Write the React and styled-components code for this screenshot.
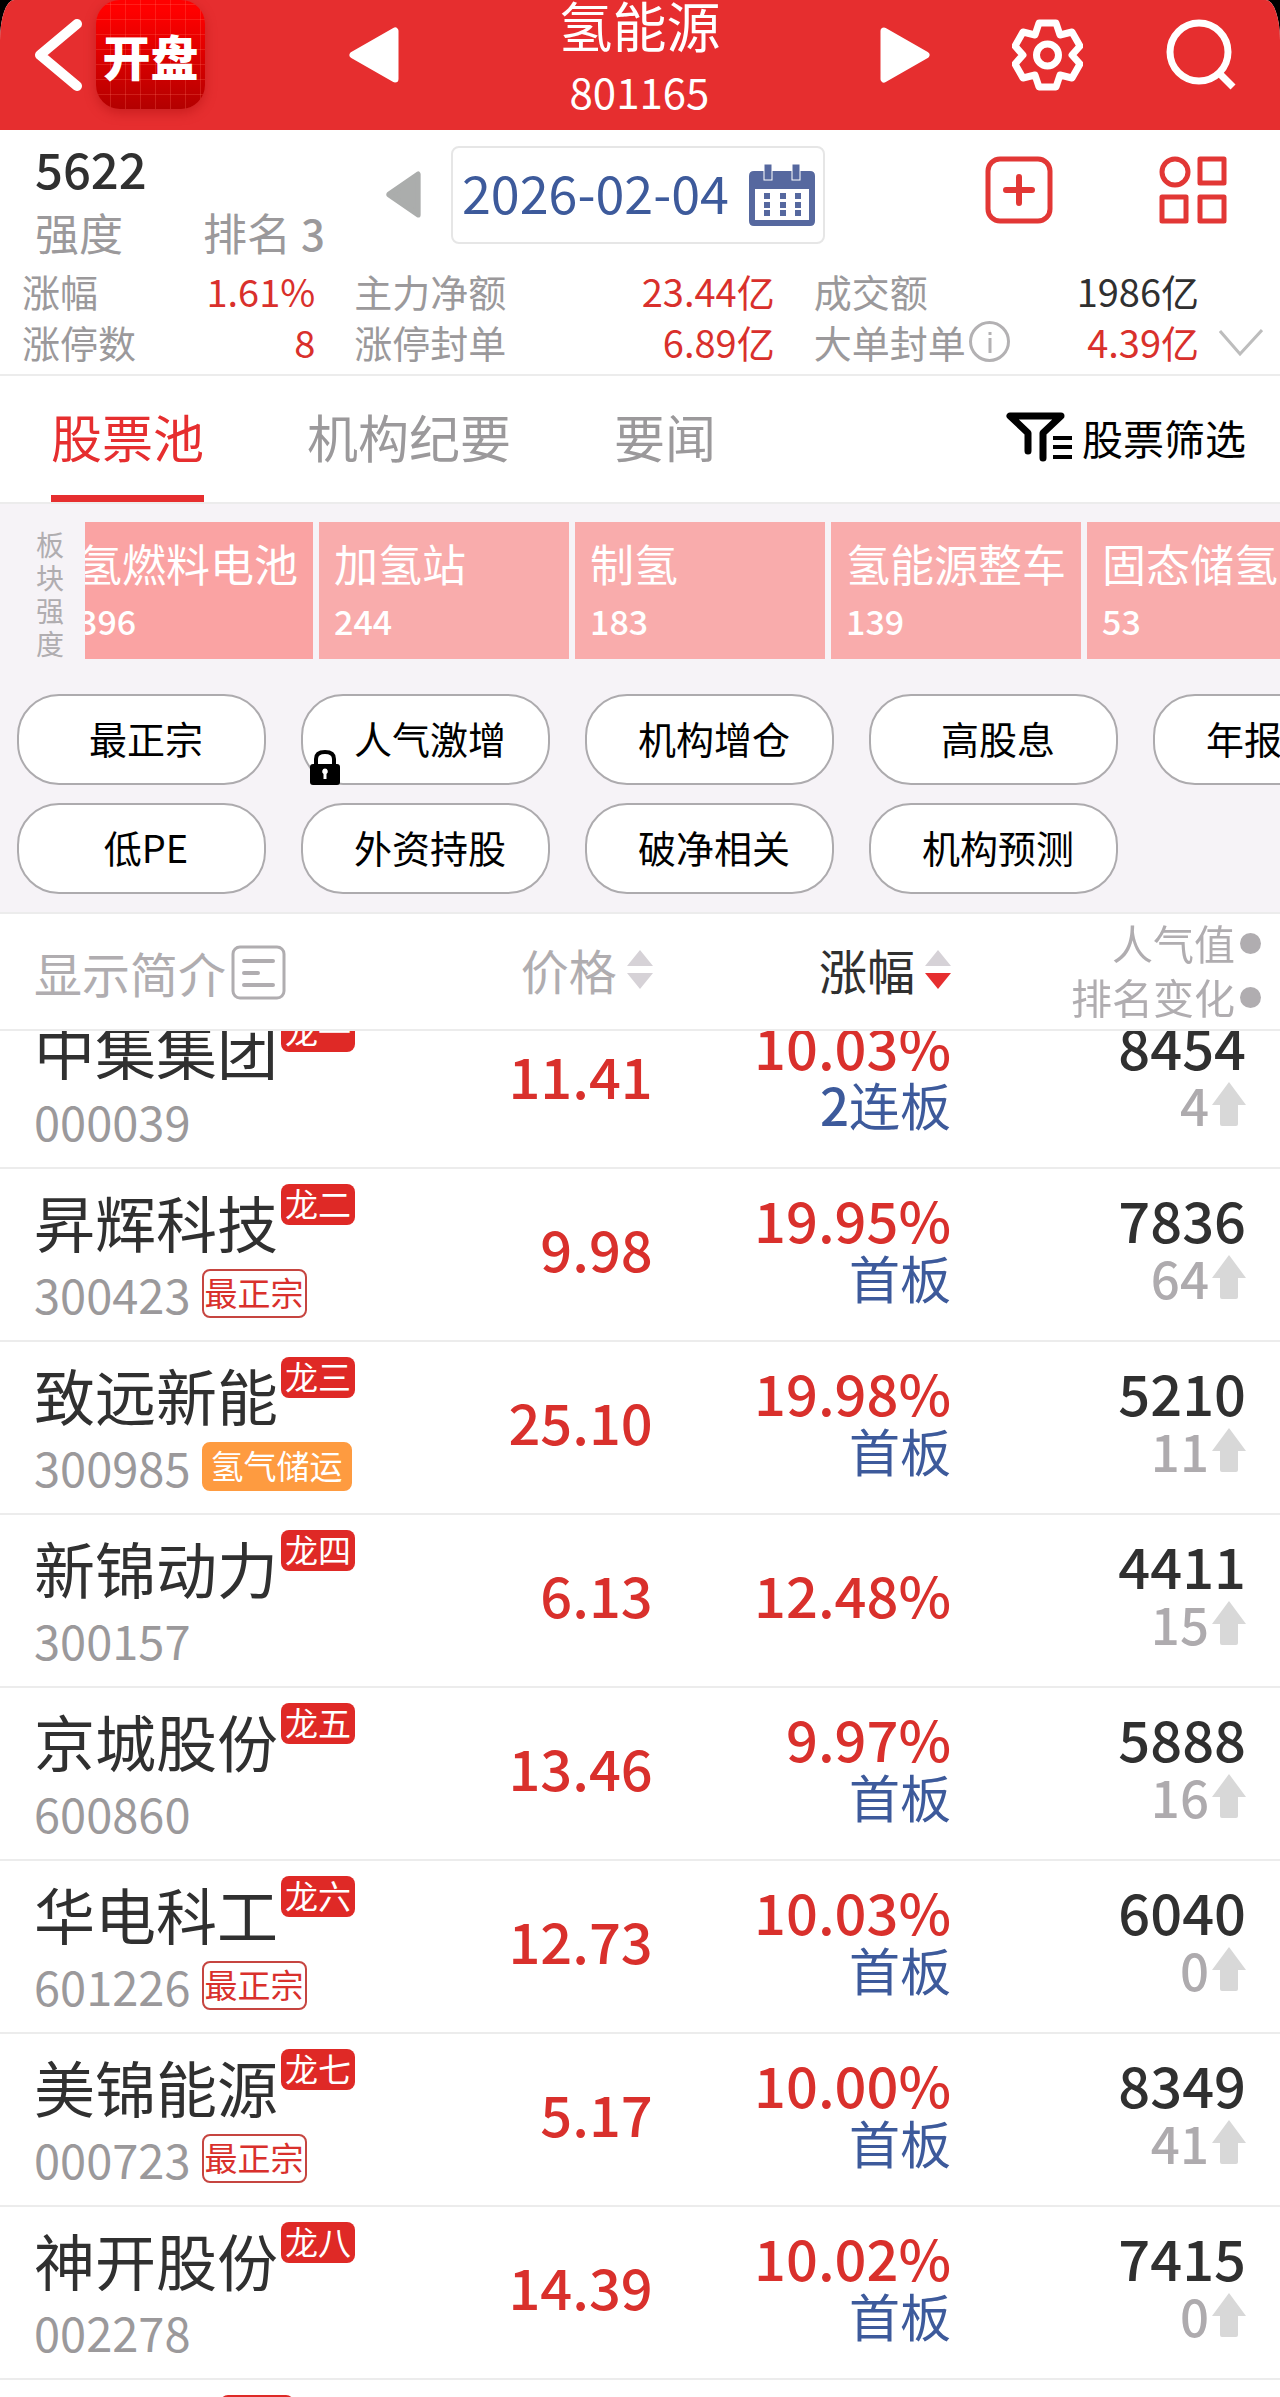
import React, { useLayoutEffect, useRef } from "react";
import styled, { createGlobalStyle } from "styled-components";

const red = "#e62e2f";
const valueRed = "#d9302c";
const ink = "#303030";
const muted = "#9b999b";
const faint = "#b0adb0";
const blue = "#3d5a9b";
const line = "#ececec";

const GlobalStyle = createGlobalStyle`
  * { box-sizing: border-box; }
  body { margin: 0; background: #000; }
  body, button {
    font-family: "Noto Sans CJK SC", "Noto Sans", sans-serif;
  }
  button {
    border: 0;
    padding: 0;
    margin: 0;
    background: none;
    color: inherit;
    cursor: pointer;
  }
  svg { display: block; flex: none; }
`;

const Screen = styled.div`
  height: 100vh;
  display: flex;
  flex-direction: column;
  overflow: hidden;
  color: ${ink};
  background: #fff;
  border-radius: 14px 14px 0 0 / 40px 40px 0 0;
`;

/* ---------- title bar ---------- */

const TitleBar = styled.header`
  flex: none;
  height: 130px;
  padding: 0 44px 24px 34px;
  display: grid;
  grid-template-columns: 315px minmax(0, 1fr) 306px;
  align-items: center;
  background: ${red};
  color: #fff;
`;

const BarStart = styled.div`
  display: flex;
  align-items: center;
  gap: 14px;
`;

const BarCentre = styled.div`
  display: flex;
  align-items: center;
  justify-content: space-between;
  height: 106px;
`;

const BarEnd = styled.div`
  display: flex;
  align-items: center;
  justify-content: flex-end;
  gap: 83px;
`;

const AppLogo = styled.span`
  width: 109px;
  height: 109px;
  display: flex;
  align-items: center;
  justify-content: center;
  border-radius: 24px;
  font-size: 48px;
  font-weight: 900;
  line-height: 100px;
  white-space: nowrap;
  background:
    repeating-linear-gradient(90deg, transparent 0 14px, rgba(255, 120, 100, 0.25) 14px 15px),
    repeating-linear-gradient(0deg, transparent 0 14px, rgba(255, 120, 100, 0.25) 14px 15px),
    linear-gradient(#ff0000 10%, #b30000);
  box-shadow: 0 4px 12px rgba(150, 0, 0, 0.35);
`;

const TitleBlock = styled.div`
  padding-top: 6px;
  text-align: center;
  line-height: 66px;
`;

const Title = styled.h1`
  margin: 0;
  font-size: 54px;
  font-weight: 400;
`;

const TitleCode = styled.div`
  font-size: 42px;
`;

/* ---------- summary ---------- */

const Summary = styled.section`
  flex: none;
  padding-bottom: 7px;
  border-bottom: 2px solid ${line};
`;

const SummaryTop = styled.div`
  display: flex;
  align-items: center;
  padding: 0 53px 0 35px;
`;

const Strength = styled.div`
  flex: 0 1 351px;
  padding-top: 5px;
  line-height: 65px;
  white-space: nowrap;
`;

const StrengthValue = styled.div`
  font-size: 49px;
  font-weight: 500;
`;

const StrengthLine = styled.div`
  display: flex;
  gap: 80px;
  font-size: 44px;
  color: ${muted};

  b {
    font-weight: 500;
    margin-left: 10px;
    font-size: 42px;
  }
`;

const DateGroup = styled.div`
  display: flex;
  align-items: center;
  gap: 30px;
  padding-bottom: 6px;
`;

const DateButton = styled.button`
  height: 98px;
  padding: 0 8px 0 9px;
  display: flex;
  align-items: center;
  gap: 20px;
  border: 2px solid #e6e6e6;
  border-radius: 8px;
  color: ${blue};
  font-size: 52px;
  line-height: 84px;
  white-space: nowrap;

  time {
    padding-bottom: 6px;
  }
`;

const SummaryActions = styled.div`
  margin-left: auto;
  display: flex;
  gap: 106px;
  padding-bottom: 16px;
`;

const StatsRow = styled.div`
  display: flex;
  align-items: flex-end;
  gap: 20px;
  padding: 0 17px 0 22px;
`;

const Stats = styled.dl`
  flex: 1;
  margin: 0;
  display: grid;
  grid-template-columns: 293fr 420fr 385fr;
  column-gap: 39px;
  font-size: 38px;
  line-height: 51px;
  white-space: nowrap;
`;

const Stat = styled.div`
  display: flex;
  justify-content: space-between;

  dt {
    display: flex;
    align-items: center;
    gap: 3px;
    color: ${muted};
  }

  dd {
    margin: 0;
    color: ${(p) => (p.$up ? valueRed : ink)};
  }
`;

const ExpandButton = styled.button`
  padding-bottom: 10px;
`;

/* ---------- tabs ---------- */

const TabBar = styled.nav`
  flex: none;
  height: 128px;
  padding: 0 34px 0 51px;
  display: flex;
  align-items: stretch;
  gap: 103px;
  border-bottom: 2px solid ${line};
`;

const Tab = styled.button`
  font-size: 51px;
  line-height: 112px;
  white-space: nowrap;
  color: ${(p) => (p.$active ? red : muted)};
  border-bottom: 7px solid ${(p) => (p.$active ? red : "transparent")};
`;

const FilterButton = styled.button`
  margin-left: auto;
  display: flex;
  align-items: center;
  gap: 10px;
  padding-bottom: 4px;
  font-size: 41px;
  line-height: 60px;
  white-space: nowrap;
  color: #000;
`;

/* ---------- sector strength and tags ---------- */

const FilterArea = styled.section`
  flex: none;
  padding: 18px 0 18px;
  background: #f6f3f7;
  border-bottom: 2px solid ${line};
`;

const SectorRow = styled.div`
  display: flex;
  padding-left: 36px;
`;

const SectorLabel = styled.div`
  flex: none;
  width: 49px;
  padding: 6px 21px 0 0;
  color: ${faint};
  font-size: 28px;
  line-height: 33px;
  word-break: break-all;
`;

const SectorStrip = styled.div`
  flex: 1;
  min-width: 0;
  display: flex;
  gap: 6px;
  overflow-x: auto;
  scrollbar-width: none;
`;

const SectorCard = styled.button`
  flex: 0 0 250px;
  height: 137px;
  padding: 0 0 0 15px;
  text-align: left;
  white-space: nowrap;
  color: #fff;
  background: ${(p) => (p.$strong ? "#faa3a3" : "#f9acac")};
`;

const SectorName = styled.div`
  font-size: 44px;
  line-height: 60px;
`;

const SectorValue = styled.div`
  font-size: 34px;
  font-weight: 500;
  line-height: 56px;
`;

const PillGrid = styled.div`
  margin-top: 34px;
  padding-left: 17px;
  display: grid;
  grid-template-columns: repeat(5, 249px);
  gap: 18px 35px;
  overflow: hidden;
`;

const Pill = styled.button`
  position: relative;
  height: 91px;
  padding: 0 0 4px 9px;
  border: 2px solid #adabae;
  border-radius: 42px;
  background: #fff;
  color: #000;
  font-size: 38px;
  line-height: 56px;
  white-space: nowrap;
`;

const LockBadge = styled.span`
  position: absolute;
  left: 7px;
  bottom: -2px;
`;

/* ---------- stock table ---------- */

const ListViewport = styled.div`
  flex: 1;
  min-height: 0;
  overflow-y: auto;
  scrollbar-width: none;
`;

const StockTable = styled.table`
  width: 100%;
  table-layout: fixed;
  border-collapse: separate;
  border-spacing: 0;

  th {
    position: sticky;
    top: 0;
    z-index: 1;
    height: 117px;
    padding: 0;
    background: #fff;
    border-bottom: 2px solid ${line};
    font-weight: 400;
    text-align: right;
  }

  td {
    height: 173px;
    padding: 0 0 14px;
    border-bottom: 2px solid ${line};
    text-align: right;
    white-space: nowrap;
  }

  th:first-child,
  td:first-child {
    padding-left: 34px;
    text-align: left;
  }

  td:first-child {
    padding-bottom: 0;
    vertical-align: top;
  }

  td:last-child {
    padding-right: 34px;
  }

  th:last-child {
    padding: 0 19px 6px 0;
  }
`;

const Col = styled.col`
  width: ${(p) => p.$share}%;
`;

const HeadButton = styled.button`
  display: inline-flex;
  align-items: ${(p) => (p.$low ? "flex-end" : "center")};
  gap: ${(p) => (p.$low ? 5 : 10)}px;
  padding-bottom: ${(p) => (p.$low ? 0 : 5)}px;
  font-size: 48px;
  line-height: ${(p) => (p.$low ? 56 : 60)}px;
  white-space: nowrap;
  vertical-align: middle;
  color: ${(p) => (p.$active ? ink : faint)};
`;

const HeadOption = styled.button`
  margin-left: auto;
  display: flex;
  align-items: center;
  gap: 5px;
  font-size: 41px;
  line-height: 54px;
  white-space: nowrap;
  color: ${faint};

  &::after {
    content: "";
    width: 21px;
    height: 21px;
    margin-top: 4px;
    border-radius: 50%;
    background: ${faint};
  }
`;

const NameLine = styled.div`
  display: flex;
  align-items: flex-start;
  gap: 3px;
  margin-top: 15px;
`;

const StockName = styled.span`
  font-size: 61px;
  line-height: 76px;
`;

const RankBadge = styled.span`
  height: 41px;
  padding: 0 4px;
  border-radius: 8px;
  background: #df2926;
  color: #fff;
  font-size: 33px;
  line-height: 38px;
`;

const CodeLine = styled.div`
  display: flex;
  align-items: center;
  gap: 11px;
  height: 49px;
  margin-top: 9px;
`;

const StockCode = styled.span`
  font-size: 47px;
  line-height: 49px;
  color: ${muted};
`;

const Tag = styled.span`
  height: 49px;
  padding: 0 ${(p) => (p.$solid ? 7 : 1)}px;
  border: 2px solid ${(p) => (p.$solid ? "#fe9b40" : "#c64540")};
  border-radius: 8px;
  background: ${(p) => (p.$solid ? "#fe9b40" : "#fff")};
  color: ${(p) => (p.$solid ? "#fff" : valueRed)};
  font-size: 33px;
  line-height: 42px;
`;

const Figure = styled.div`
  font-size: 56px;
  font-weight: 500;
  line-height: 58px;
  color: ${(p) => (p.$up ? valueRed : ink)};
`;

const Streak = styled.div`
  font-size: 51px;
  line-height: 58px;
  color: ${blue};

  b {
    font-weight: 500;
  }
`;

const RankMove = styled.div`
  display: flex;
  justify-content: flex-end;
  align-items: center;
  gap: 3px;
  font-size: 51px;
  font-weight: 500;
  line-height: 58px;
  color: #aeabae;
`;

/* ---------- drawings ---------- */

const BackIcon = () => (
  <svg width="48" height="72" viewBox="0 0 48 72" fill="none" stroke="#fff" strokeWidth="10" strokeLinecap="round" strokeLinejoin="round">
    <path d="M43 5L6 36L43 67" />
  </svg>
);

const Triangle = ({ color = "#fff", width = 50, height = 56, flip }) => (
  <svg width={width} height={height} viewBox="0 0 50 56" preserveAspectRatio="none">
    <path
      d="M4 28L46 4V52Z"
      fill={color}
      stroke={color}
      strokeWidth="7"
      strokeLinejoin="round"
      transform={flip ? "rotate(180 25 28)" : undefined}
    />
  </svg>
);

const GearIcon = () => (
  <svg width="71" height="72" viewBox="0 0 71 72" fill="none" stroke="#fff" strokeWidth="7" strokeLinejoin="round">
    <path d="M27 4H44L48 16L60 13L68 27L60 36L68 45L60 59L48 56L44 68H27L23 56L11 59L3 45L11 36L3 27L11 13L23 16Z" />
    <circle cx="35.500" cy="36" r="11" />
  </svg>
);

const SearchIcon = () => (
  <svg width="70" height="72" viewBox="0 0 70 72" fill="none" stroke="#fff" strokeWidth="7">
    <circle cx="33" cy="33" r="29" />
    <path d="M53 54L67 68" />
  </svg>
);

const CalendarIcon = () => (
  <svg width="66" height="62" viewBox="0 0 66 62" fill="#56689f">
    <path fillRule="evenodd" d="M5 7H61Q66 7 66 12V57Q66 62 61 62H5Q0 62 0 57V12Q0 7 5 7ZM6 25V56H60V25Z" />
    <rect x="15" y="0" width="8" height="16" stroke="#fff" strokeWidth="1" />
    <rect x="43" y="0" width="8" height="16" stroke="#fff" strokeWidth="1" />
    {[15, 31, 46].map((x) =>
      [29, 38, 46].map((y) => <rect key={`${x}-${y}`} x={x} y={y} width="6" height="6" />)
    )}
  </svg>
);

const AddIcon = () => (
  <svg width="68" height="68" viewBox="0 0 68 68" fill="none" stroke="#e23735" strokeWidth="5">
    <rect x="3" y="3" width="62" height="62" rx="12" />
    <path d="M34 21V47M21 34H47" strokeWidth="6" strokeLinecap="round" />
  </svg>
);

const GridIcon = () => (
  <svg width="68" height="68" viewBox="0 0 68 68" fill="none" stroke="#e23735" strokeWidth="5" strokeLinejoin="round">
    <circle cx="16" cy="16" r="13" />
    <rect x="41" y="3" width="24" height="24" />
    <rect x="3" y="41" width="24" height="24" />
    <rect x="41" y="41" width="24" height="24" />
  </svg>
);

const InfoIcon = () => (
  <svg width="41" height="41" viewBox="0 0 41 41" fill="none" stroke="#b3b1b3" strokeWidth="3">
    <circle cx="20.500" cy="20.500" r="19" />
    <path d="M21 17V32M21 11V14" />
  </svg>
);

const ChevronIcon = () => (
  <svg width="44" height="28" viewBox="0 0 44 28" fill="none" stroke="#bdbdbd" strokeWidth="3">
    <path d="M1 2L21 25L43 1" />
  </svg>
);

const FunnelIcon = () => (
  <svg width="66" height="50" viewBox="0 0 66 50" fill="none" stroke="#000" strokeWidth="7" strokeLinecap="round" strokeLinejoin="round">
    <path d="M22 39V21L4 4H55L37 21V46" />
    <path d="M47 26H66M47 35H66M47 45H66" strokeWidth="4" strokeLinecap="butt" />
  </svg>
);

const LockIcon = () => (
  <svg width="30" height="35" viewBox="0 0 30 35">
    <path d="M6 15V9Q6 2 15 2Q24 2 24 9V15" fill="none" stroke="#000" strokeWidth="4" />
    <rect y="14" width="30" height="21" rx="3" />
    <path d="M15 18.500A3 3 0 0 1 16.500 24V29H13.500V24A3 3 0 0 1 15 18.500Z" fill="#fff" />
  </svg>
);

const NoteIcon = () => (
  <svg width="55" height="55" viewBox="0 0 55 55" fill="none" stroke={faint} strokeWidth="4" strokeLinecap="round">
    <rect x="2" y="2" width="51" height="51" rx="7" strokeWidth="3" />
    <path d="M13 16H42M13 28H27M13 40H42" />
  </svg>
);

const SortIcon = ({ down }) => (
  <svg width="26" height="39" viewBox="0 0 26 39">
    <path d="M13 0L26 16H0Z" fill="#d6d2d7" />
    <path d="M13 39L26 23H0Z" fill={down ? red : "#d6d2d7"} />
  </svg>
);

const UpIcon = () => (
  <svg width="34" height="44" viewBox="0 0 34 44" fill="#d8d8d8">
    <path d="M17 0L34 23H26V42Q26 44 24 44H10Q8 44 8 42V23H0Z" />
  </svg>
);

/* ---------- data ---------- */

const stats = [
  { label: "涨幅", value: "1.61%", up: true },
  { label: "主力净额", value: "23.44亿", up: true },
  { label: "成交额", value: "1986亿" },
  { label: "涨停数", value: "8", up: true },
  { label: "涨停封单", value: "6.89亿", up: true },
  { label: "大单封单", value: "4.39亿", up: true, info: true },
];

const tabs = ["股票池", "机构纪要", "要闻"];

const sectors = [
  { name: "氢燃料电池", value: 396, strong: true },
  { name: "加氢站", value: 244 },
  { name: "制氢", value: 183 },
  { name: "氢能源整车", value: 139 },
  { name: "固态储氢", value: 53 },
];

const pills = [
  "最正宗", "人气激增", "机构增仓", "高股息", "年报预增",
  "低PE", "外资持股", "破净相关", "机构预测",
];

const stocks = [
  { name: "中集集团", rank: "龙一", code: "000039", price: "11.41", change: "10.03%", count: 2, streak: "连板", heat: 8454, move: 4 },
  { name: "昇辉科技", rank: "龙二", code: "300423", tag: "最正宗", price: "9.98", change: "19.95%", streak: "首板", heat: 7836, move: 64 },
  { name: "致远新能", rank: "龙三", code: "300985", tag: "氢气储运", solid: true, price: "25.10", change: "19.98%", streak: "首板", heat: 5210, move: 11 },
  { name: "新锦动力", rank: "龙四", code: "300157", price: "6.13", change: "12.48%", heat: 4411, move: 15 },
  { name: "京城股份", rank: "龙五", code: "600860", price: "13.46", change: "9.97%", streak: "首板", heat: 5888, move: 16 },
  { name: "华电科工", rank: "龙六", code: "601226", tag: "最正宗", price: "12.73", change: "10.03%", streak: "首板", heat: 6040, move: 0 },
  { name: "美锦能源", rank: "龙七", code: "000723", tag: "最正宗", price: "5.17", change: "10.00%", streak: "首板", heat: 8349, move: 41 },
  { name: "神开股份", rank: "龙八", code: "002278", price: "14.39", change: "10.02%", streak: "首板", heat: 7415, move: 0 },
  { name: "金龙羽", rank: "龙九", code: "002882", price: "31.20", change: "10.01%", streak: "首板", heat: 3962, move: 7 },
];

const StockRow = ({ stock }) => (
  <tr>
    <td>
      <NameLine>
        <StockName>{stock.name}</StockName>
        <RankBadge>{stock.rank}</RankBadge>
      </NameLine>
      <CodeLine>
        <StockCode>{stock.code}</StockCode>
        {stock.tag && <Tag $solid={stock.solid}>{stock.tag}</Tag>}
      </CodeLine>
    </td>
    <td><Figure $up>{stock.price}</Figure></td>
    <td>
      <Figure $up>{stock.change}</Figure>
      {stock.streak && (
        <Streak>{stock.count && <b>{stock.count}</b>}{stock.streak}</Streak>
      )}
    </td>
    <td>
      <Figure>{stock.heat}</Figure>
      <RankMove>{stock.move}<UpIcon /></RankMove>
    </td>
  </tr>
);

export default function App() {
  const stripRef = useRef(null);
  const listRef = useRef(null);

  useLayoutEffect(() => {
    stripRef.current.scrollLeft = 22;
    listRef.current.scrollTop = 35;
  }, []);

  return (
    <>
      <GlobalStyle />
      <Screen>
        <TitleBar>
          <BarStart>
            <button aria-label="返回"><BackIcon /></button>
            <AppLogo>开盘</AppLogo>
          </BarStart>
          <BarCentre>
            <button aria-label="上一个板块"><Triangle /></button>
            <TitleBlock>
              <Title>氢能源</Title>
              <TitleCode>801165</TitleCode>
            </TitleBlock>
            <button aria-label="下一个板块"><Triangle flip /></button>
          </BarCentre>
          <BarEnd>
            <button aria-label="设置"><GearIcon /></button>
            <button aria-label="搜索"><SearchIcon /></button>
          </BarEnd>
        </TitleBar>

        <Summary>
          <SummaryTop>
            <Strength>
              <StrengthValue>5622</StrengthValue>
              <StrengthLine>
                <span>强度</span>
                <span>排名<b>3</b></span>
              </StrengthLine>
            </Strength>
            <DateGroup>
              <button aria-label="前一天"><Triangle color="#abadac" width={35} height={47} /></button>
              <DateButton>
                <time dateTime="2026-02-04">2026-02-04</time>
                <CalendarIcon />
              </DateButton>
            </DateGroup>
            <SummaryActions>
              <button aria-label="添加"><AddIcon /></button>
              <button aria-label="更多"><GridIcon /></button>
            </SummaryActions>
          </SummaryTop>
          <StatsRow>
            <Stats>
              {stats.map((s) => (
                <Stat key={s.label} $up={s.up}>
                  <dt>{s.label}{s.info && <InfoIcon />}</dt>
                  <dd>{s.value}</dd>
                </Stat>
              ))}
            </Stats>
            <ExpandButton aria-label="展开"><ChevronIcon /></ExpandButton>
          </StatsRow>
        </Summary>

        <TabBar>
          {tabs.map((t, i) => (
            <Tab key={t} $active={i === 0}>{t}</Tab>
          ))}
          <FilterButton><FunnelIcon />股票筛选</FilterButton>
        </TabBar>

        <FilterArea>
          <SectorRow>
            <SectorLabel>板块强度</SectorLabel>
            <SectorStrip ref={stripRef}>
              {sectors.map((s) => (
                <SectorCard key={s.name} $strong={s.strong}>
                  <SectorName>{s.name}</SectorName>
                  <SectorValue>{s.value}</SectorValue>
                </SectorCard>
              ))}
            </SectorStrip>
          </SectorRow>
          <PillGrid>
            {pills.map((p) => (
              <Pill key={p}>
                {p}
                {p === "人气激增" && <LockBadge><LockIcon /></LockBadge>}
              </Pill>
            ))}
          </PillGrid>
        </FilterArea>

        <ListViewport ref={listRef}>
          <StockTable>
            <colgroup>
              <Col $share={28} />
              <Col $share={23} />
              <Col $share={23.3} />
              <Col $share={25.7} />
            </colgroup>
            <thead>
              <tr>
                <th><HeadButton $low>显示简介<NoteIcon /></HeadButton></th>
                <th><HeadButton>价格<SortIcon /></HeadButton></th>
                <th><HeadButton $active>涨幅<SortIcon down /></HeadButton></th>
                <th>
                  <HeadOption>人气值</HeadOption>
                  <HeadOption>排名变化</HeadOption>
                </th>
              </tr>
            </thead>
            <tbody>
              {stocks.map((s) => <StockRow key={s.code} stock={s} />)}
            </tbody>
          </StockTable>
        </ListViewport>
      </Screen>
    </>
  );
}
